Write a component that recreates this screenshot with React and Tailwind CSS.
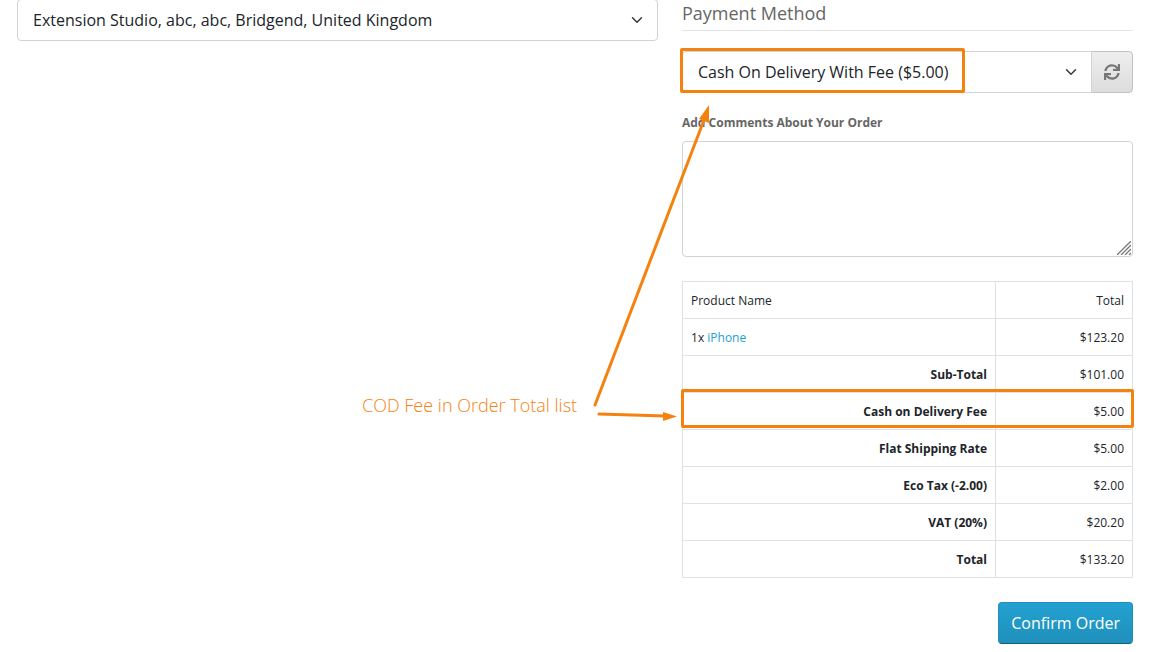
import React, { useState } from 'react';
import { FaSync } from 'react-icons/fa';

const ADDRESSES = [{ value: '1', label: 'Extension Studio, abc, abc, Bridgend, United Kingdom' }];

const PAYMENT_METHODS = [{ value: 'cod_fee', label: 'Cash On Delivery With Fee ($5.00)' }];

const PRODUCTS = [{ id: 1, quantity: 1, name: 'iPhone', total: '$123.20' }];

const TOTALS = [
  { code: 'sub_total', title: 'Sub-Total', text: '$101.00' },
  { code: 'cod_fee', title: 'Cash on Delivery Fee', text: '$5.00', highlight: true },
  { code: 'shipping', title: 'Flat Shipping Rate', text: '$5.00' },
  { code: 'eco_tax', title: 'Eco Tax (-2.00)', text: '$2.00' },
  { code: 'vat', title: 'VAT (20%)', text: '$20.20' },
  { code: 'total', title: 'Total', text: '$133.20' }
];

const cell = 'border border-[#dee2e6] px-2 pt-[9px] pb-[7px]';

const Select = ({ id, label, options, value, onChange, rounded }) => (
  <div className="relative min-w-0 flex-1">
    <select
      id={id}
      aria-label={label}
      value={value}
      onChange={(e) => onChange(e.target.value)}
      className={`block h-[42px] w-full appearance-none border border-[#ced4da] bg-white pr-10 pl-[15px] text-base text-[#212529] ${rounded}`}
    >
      {options.map((o) => (
        <option key={o.value} value={o.value}>
          {o.label}
        </option>
      ))}
    </select>
    <svg
      className="pointer-events-none absolute top-1/2 right-[15px] h-3 w-3 -translate-y-1/2"
      viewBox="0 0 16 16"
      fill="none"
      stroke="#343a40"
      strokeWidth="2"
      strokeLinecap="round"
      strokeLinejoin="round"
    >
      <path d="m2 5 6 6 6-6" />
    </svg>
  </div>
);

const Highlight = ({ className }) => (
  <div className={`pointer-events-none absolute rounded-xs border-3 border-[#f5820f] ${className}`} />
);

const Callout = () => (
  <div className="pointer-events-none absolute top-[100px] right-full h-[330px] w-80">
    <p className="absolute top-[291px] left-0 text-lg font-light whitespace-nowrap text-[#f5820f]">
      COD Fee in Order Total list
    </p>
    <svg className="absolute inset-0 h-full w-full overflow-visible" viewBox="0 0 320 330" fill="#f5820f">
      <path d="M233 305 342 20" fill="none" stroke="#f5820f" strokeWidth="3" strokeLinecap="round" />
      <path d="m347 5-10 14 10 4z" />
      <path d="m237 314 66 2" fill="none" stroke="#f5820f" strokeWidth="3" strokeLinecap="round" />
      <path d="m315 316.500-14-4.500v9z" />
    </svg>
  </div>
);

const OrderTable = () => (
  <table className="w-full border-collapse text-xs leading-5 text-[#212529]">
    <thead>
      <tr>
        <th className={`${cell} text-left font-normal`}>Product Name</th>
        <th className={`${cell} w-[137px] text-right font-normal`}>Total</th>
      </tr>
    </thead>
    <tbody>
      {PRODUCTS.map((p) => (
        <tr key={p.id}>
          <td className={cell}>
            {p.quantity}x{' '}
            <a href="#product" className="text-[#23a1d1]">
              {p.name}
            </a>
          </td>
          <td className={`${cell} text-right`}>{p.total}</td>
        </tr>
      ))}
    </tbody>
    <tfoot>
      {TOTALS.map((t) => (
        <tr key={t.code} className="relative">
          <th scope="row" className={`${cell} text-right font-bold`}>
            {t.title}
            {t.highlight ? <Highlight className="-top-1 -right-px -left-0.5 h-[39px]" /> : null}
          </th>
          <td className={`${cell} text-right`}>{t.text}</td>
        </tr>
      ))}
    </tfoot>
  </table>
);

const App = () => {
  const [address, setAddress] = useState('1');
  const [payment, setPayment] = useState('cod_fee');
  const [comment, setComment] = useState('');

  return (
    <main className="grid grid-cols-[641fr_451fr] gap-6 overflow-hidden bg-white pr-[19px] pb-2 pl-[17px] font-['Open_Sans','Noto_Sans',sans-serif] text-[#212529]">
      <section className="-mt-px flex min-w-0 items-start">
        <Select
          id="input-shipping-address"
          label="Shipping address"
          options={ADDRESSES}
          value={address}
          onChange={setAddress}
          rounded="rounded-sm"
        />
      </section>

      <section className="relative min-w-0">
        <h2 className="border-b border-[#e5e5e5] pb-1 text-lg leading-[26px] text-[#666666]">Payment Method</h2>

        <div className="relative mt-5 flex">
          <Select
            id="input-payment-method"
            label="Payment method"
            options={PAYMENT_METHODS}
            value={payment}
            onChange={setPayment}
            rounded="rounded-l-sm"
          />
          <button
            type="button"
            aria-label="Refresh payment methods"
            className="-ml-px flex w-[42px] items-center justify-center rounded-r-sm border border-[#c3c3c3] bg-linear-to-b from-[#eeeeee] to-[#dddddd] text-[#777777]"
          >
            <FaSync className="h-4 w-4" />
          </button>
          <Highlight className="-top-[3px] -left-0.5 h-[45px] w-[285px]" />
        </div>

        <label htmlFor="input-comment" className="mt-5 block text-xs leading-5 font-bold text-[#666666]">
          Add Comments About Your Order
        </label>
        <div className="relative mt-2">
          <textarea
            id="input-comment"
            value={comment}
            onChange={(e) => setComment(e.target.value)}
            className="block h-[116px] w-full resize-none rounded-sm border border-[#ced4da] bg-white px-4 py-2 text-base"
          />
          <svg
            className="pointer-events-none absolute right-0.5 bottom-0.5 h-3.5 w-3.5"
            viewBox="0 0 14 14"
            fill="none"
            stroke="#777777"
            strokeWidth="1.3"
          >
            <path d="M0 14 14 0M4 14 14 4M8 14l6-6M12 14l2-2" />
          </svg>
        </div>

        <div className="mt-6">
          <OrderTable />
        </div>

        <div className="mt-6 flex justify-end">
          <button
            type="button"
            className="h-[42px] rounded-sm border border-[#1f90bb] border-b-[#145e7a] bg-linear-to-b from-[#23a1d1] to-[#1f90bb] px-3 text-base text-white"
          >
            Confirm Order
          </button>
        </div>

        <Callout />
      </section>
    </main>
  );
};

export default App;
